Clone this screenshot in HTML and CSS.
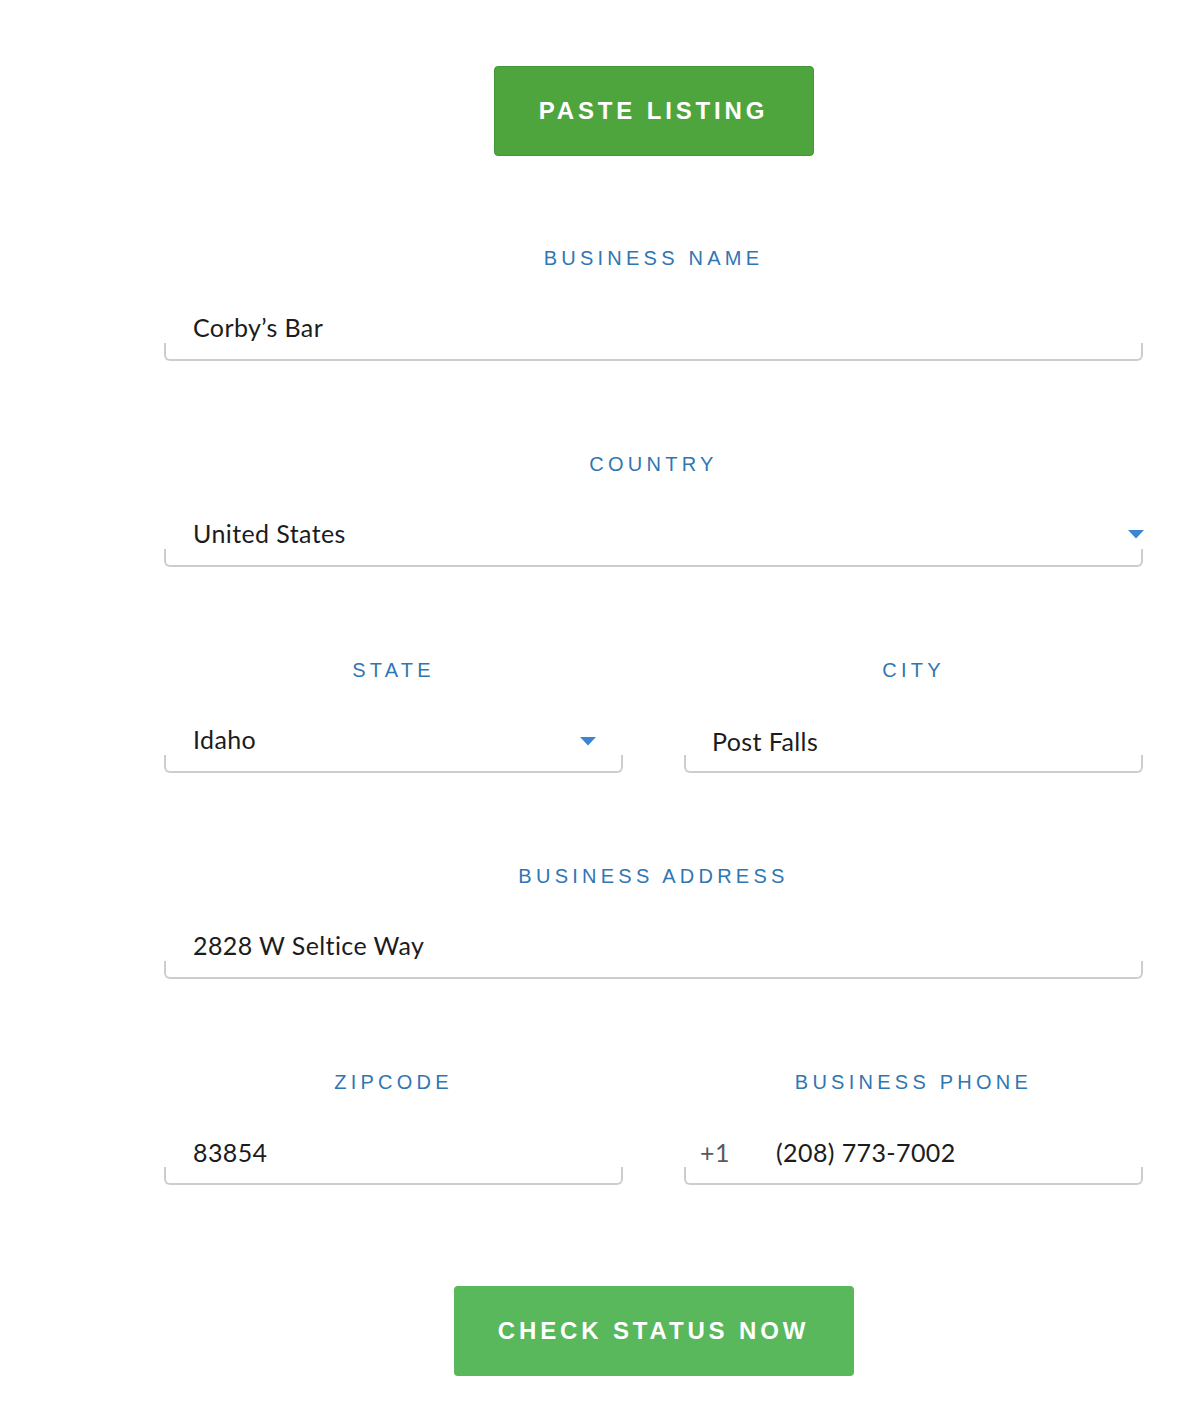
FILE: index.html
```html
<!DOCTYPE html>
<html lang="en">
<head>
<meta charset="utf-8">
<title>Check Listing</title>
<link rel="stylesheet" href="styles.css">
</head>
<body>
<main class="form">
  <div class="actions actions-top">
    <button class="btn btn-paste" type="button">PASTE LISTING</button>
  </div>

  <div class="field">
    <div class="label">BUSINESS NAME</div>
    <div class="input"><span class="value">Corby’s Bar</span></div>
  </div>

  <div class="field">
    <div class="label">COUNTRY</div>
    <div class="input select select-wide">
      <span class="value">United States</span>
      <svg class="caret" width="16" height="9" viewBox="0 0 16 9"><polygon points="0,0 16,0 8,8.5" fill="#3a86d3"/></svg>
    </div>
  </div>

  <div class="row">
    <div class="field">
      <div class="label">STATE</div>
      <div class="input select select-narrow">
        <span class="value">Idaho</span>
        <svg class="caret" width="16" height="9" viewBox="0 0 16 9"><polygon points="0,0 16,0 8,8.5" fill="#3a86d3"/></svg>
      </div>
    </div>
    <div class="field">
      <div class="label">CITY</div>
      <div class="input input-low"><span class="value">Post Falls</span></div>
    </div>
  </div>

  <div class="field">
    <div class="label">BUSINESS ADDRESS</div>
    <div class="input"><span class="value">2828 W Seltice Way</span></div>
  </div>

  <div class="row row-last">
    <div class="field">
      <div class="label">ZIPCODE</div>
      <div class="input input-last"><span class="value">83854</span></div>
    </div>
    <div class="field">
      <div class="label">BUSINESS PHONE</div>
      <div class="input input-last input-phone">
        <span class="prefix">+1</span>
        <span class="value">(208) 773-7002</span>
      </div>
    </div>
  </div>

  <div class="actions">
    <button class="btn btn-check" type="button">CHECK STATUS NOW</button>
  </div>
</main>
</body>
</html>
```

FILE: styles.css
```css
html, body {
  margin: 0;
  padding: 0;
  background: #ffffff;
}

.form {
  width: 979px;
  margin-left: 164px;
  padding-top: 66px;
  display: flex;
  flex-direction: column;
}

.actions {
  display: flex;
  justify-content: center;
}

.actions-top {
  margin-bottom: 90px;
}

.btn {
  font-family: "Liberation Sans", Arial, sans-serif;
  font-weight: 700;
  font-size: 24px;
  letter-spacing: 3.85px;
  color: #ffffff;
  height: 90px;
  border-radius: 4px;
  cursor: pointer;
  padding: 0;
}

.btn-paste {
  width: 320px;
  background: #4ea53d;
  border: 1px solid #43953a;
}

.btn-check {
  width: 400px;
  background: #58b85b;
  border: none;
}

.field {
  display: flex;
  flex-direction: column;
  margin-bottom: 91px;
}

.row {
  display: grid;
  grid-template-columns: 459px 459px;
  column-gap: 61px;
}

.row .field {
  min-width: 0;
}

.row-last .field {
  margin-bottom: 101px;
}

.label {
  font-family: "Liberation Sans", Arial, sans-serif;
  font-size: 20px;
  line-height: 24px;
  letter-spacing: 4.25px;
  color: #2f76b3;
  text-align: center;
  margin-bottom: 27px;
}

.input {
  position: relative;
  height: 64px;
  box-sizing: border-box;
  padding: 0 0 4px 29px;
  display: flex;
  align-items: center;
  font-family: "Lato", "Noto Sans", sans-serif;
  font-weight: 400;
  font-size: 25px;
  letter-spacing: 0.4px;
  color: #1c1c1c;
}

.input::after {
  content: "";
  position: absolute;
  left: 0;
  right: 0;
  bottom: 0;
  height: 18px;
  box-sizing: border-box;
  border: 2px solid #cdcdcd;
  border-top: none;
  border-radius: 0 0 6px 6px;
}

.input-low {
  padding-left: 28px;
  padding-top: 2px;
  padding-bottom: 2px;
}

.input-last {
  padding-top: 1px;
}

.select .caret {
  position: absolute;
  top: 27px;
}

.select-wide .caret {
  right: -1px;
}

.select-narrow .caret {
  right: 27px;
  top: 28px;
}

.input-phone {
  padding-left: 16px;
}

.prefix {
  color: #5a5a5a;
  width: 76px;
}
```
